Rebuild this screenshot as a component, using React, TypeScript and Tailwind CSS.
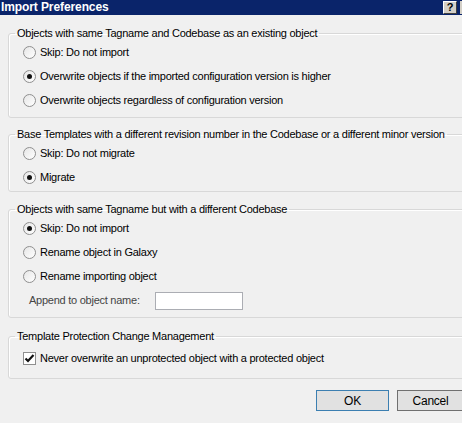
import React from "react"

function Radio({ checked, label }: { checked?: boolean; label: string }) {
  return (
    <label className="flex items-center h-[24px] pl-[14px]">
      <span className="flex items-center justify-center w-[13px] h-[13px] rounded-full border border-[#8f8f8f] bg-gradient-to-br from-[#e6e6e6] to-white">
        {checked && <span className="w-[5px] h-[5px] rounded-full bg-[#111]" />}
      </span>
      <span className="ml-[4px]">{label}</span>
    </label>
  )
}

function Group({
  title,
  className,
  children,
}: {
  title: string
  className?: string
  children: React.ReactNode
}) {
  return (
    <fieldset
      className={
        "ml-[8px] w-[470px] border border-[#d8d8d8] rounded-[3px] shadow-[inset_1px_1px_0_#ffffff] px-0 " +
        (className ?? "")
      }
    >
      <legend className="ml-[6px] px-[2px] leading-[14px]">{title}</legend>
      {children}
    </fieldset>
  )
}

export default function App() {
  return (
    <div
      className="w-[462px] h-[423px] overflow-hidden bg-[#f0f0f0] text-[11px] tracking-[-0.25px] text-black"
      style={{ fontFamily: '"Liberation Sans", Arial, sans-serif' }}
    >
      {/* title bar */}
      <div className="h-[15px] bg-[#0a246a] flex items-center">
        <span className="pl-[1px] text-white font-bold text-[12px] leading-[15px] tracking-[-0.1px]">
          Import Preferences
        </span>
        <span className="ml-auto mr-[3px] w-[14px] h-[13px] bg-[#d4d0c8] border border-t-white border-l-white border-r-[#404040] border-b-[#404040] flex items-center justify-center font-bold text-[11px] leading-none">
          ?
        </span>
        <span className="w-[2px] h-[13px] bg-[#d4d0c8]" />
      </div>

      <Group title="Objects with same Tagname and Codebase as an existing object" className="mt-[11px] pb-[5px]">
        <Radio label="Skip: Do not import" />
        <Radio checked label="Overwrite objects if the imported configuration version is higher" />
        <Radio label="Overwrite objects regardless of configuration version" />
      </Group>

      <Group title="Base Templates with a different revision number in the Codebase or a different minor version" className="mt-[9px] pb-[2px]">
        <Radio label="Skip: Do not migrate" />
        <Radio checked label="Migrate" />
      </Group>

      <Group title="Objects with same Tagname but with a different Codebase" className="mt-[10px] pb-[4px]">
        <Radio checked label="Skip: Do not import" />
        <Radio label="Rename object in Galaxy" />
        <Radio label="Rename importing object" />
        <div className="flex items-center h-[25px] pl-[20px]">
          <span className="w-[126px] text-[#444]">Append to object name:</span>
          <input
            type="text"
            className="w-[88px] h-[18px] bg-white border border-[#abadb3] outline-none"
          />
        </div>
      </Group>

      <Group title="Template Protection Change Management" className="mt-[11px] pt-[3px] pb-[8px]">
        <label className="flex items-center h-[24px] pl-[14px]">
          <span className="flex items-center justify-center w-[13px] h-[13px] border border-[#8f8f8f] bg-white">
            <svg width="11" height="11" viewBox="0 0 11 11">
              <path d="M1.5 5.5 L4 8 L9.5 2" fill="none" stroke="#111" strokeWidth="2.2" />
            </svg>
          </span>
          <span className="ml-[4px]">Never overwrite an unprotected object with a protected object</span>
        </label>
      </Group>

      <div className="flex justify-end gap-[8px] mt-[11px] mr-[-2px]">
        <button className="w-[73px] h-[21px] bg-[#e1e1e1] border border-[#3c7fb1] text-[12px] leading-none">
          OK
        </button>
        <button className="w-[67px] h-[21px] bg-[#e1e1e1] border border-[#707070] text-[12px] leading-none">
          Cancel
        </button>
      </div>
    </div>
  )
}
